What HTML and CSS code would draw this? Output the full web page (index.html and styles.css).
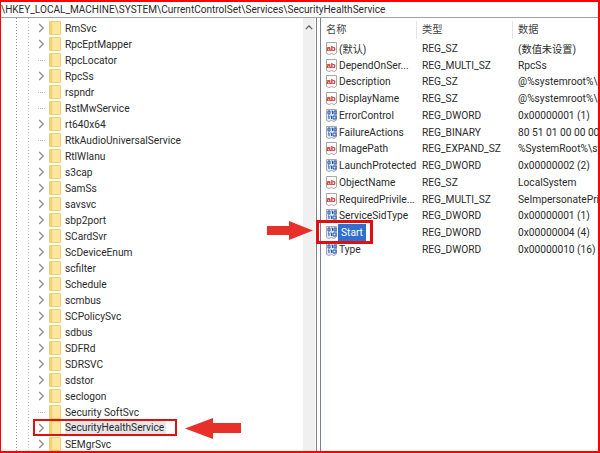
FILE: index.html
```html
<!DOCTYPE html>
<html lang="zh">
<head>
<meta charset="utf-8">
<title>Registry Editor</title>
<link rel="stylesheet" href="styles.css">
</head>
<body>
<svg class="defs" width="0" height="0" aria-hidden="true">
  <symbol id="folder" viewBox="0 0 12 14">
    <path d="M.5 .5h11v13H.5z" fill="#fde79a" stroke="#eccf75" stroke-width="1"/>
    <rect x="1" y="1" width="2" height="12" fill="#f3d069"/>
  </symbol>
  <symbol id="chev" viewBox="0 0 8 10">
    <path d="M1.2 1l4 4-4 4" fill="none" stroke="#8f8f8f" stroke-width="1.4"/>
  </symbol>
  <symbol id="ab" viewBox="0 0 13 13">
    <path d="M1.5 .5h10v10.5l-2.5 1.5-2.5-1-2.5 1-2.5-1z" fill="#fff" stroke="#a8a8a8"/>
    <text x="1.4" y="8.6" class="ab-text">ab</text>
  </symbol>
  <symbol id="bin" viewBox="0 0 13 13">
    <path d="M1.5 .5h10v10.5l-2.5 1.5-2.5-1-2.5 1-2.5-1z" fill="#dfe7f5" stroke="#a8a8a8"/>
    <path d="M3 2h2v3H3zM6.5 2h1v3M9 2h2v3H9zM3 7h1v3M5.5 7h1v3M8 7h3v3H8z" fill="none" stroke="#1f56b0" stroke-width="1"/>
  </symbol>
</svg>
<main class="frame">
  <header class="path">\HKEY_LOCAL_MACHINE\SYSTEM\CurrentControlSet\Services\SecurityHealthService</header>
  <div class="panes">
    <nav class="tree">
      <div class="row"><svg class="chev"><use href="#chev"/></svg><svg class="fold"><use href="#folder"/></svg><span>RmSvc</span></div>
      <div class="row"><svg class="chev"><use href="#chev"/></svg><svg class="fold"><use href="#folder"/></svg><span>RpcEptMapper</span></div>
      <div class="row leaf"><i class="dash"></i><svg class="fold"><use href="#folder"/></svg><span>RpcLocator</span></div>
      <div class="row"><svg class="chev"><use href="#chev"/></svg><svg class="fold"><use href="#folder"/></svg><span>RpcSs</span></div>
      <div class="row leaf"><i class="dash"></i><svg class="fold"><use href="#folder"/></svg><span>rspndr</span></div>
      <div class="row leaf"><i class="dash"></i><svg class="fold"><use href="#folder"/></svg><span>RstMwService</span></div>
      <div class="row"><svg class="chev"><use href="#chev"/></svg><svg class="fold"><use href="#folder"/></svg><span>rt640x64</span></div>
      <div class="row leaf"><i class="dash"></i><svg class="fold"><use href="#folder"/></svg><span>RtkAudioUniversalService</span></div>
      <div class="row"><svg class="chev"><use href="#chev"/></svg><svg class="fold"><use href="#folder"/></svg><span>RtlWlanu</span></div>
      <div class="row"><svg class="chev"><use href="#chev"/></svg><svg class="fold"><use href="#folder"/></svg><span>s3cap</span></div>
      <div class="row"><svg class="chev"><use href="#chev"/></svg><svg class="fold"><use href="#folder"/></svg><span>SamSs</span></div>
      <div class="row"><svg class="chev"><use href="#chev"/></svg><svg class="fold"><use href="#folder"/></svg><span>savsvc</span></div>
      <div class="row"><svg class="chev"><use href="#chev"/></svg><svg class="fold"><use href="#folder"/></svg><span>sbp2port</span></div>
      <div class="row"><svg class="chev"><use href="#chev"/></svg><svg class="fold"><use href="#folder"/></svg><span>SCardSvr</span></div>
      <div class="row"><svg class="chev"><use href="#chev"/></svg><svg class="fold"><use href="#folder"/></svg><span>ScDeviceEnum</span></div>
      <div class="row"><svg class="chev"><use href="#chev"/></svg><svg class="fold"><use href="#folder"/></svg><span>scfilter</span></div>
      <div class="row"><svg class="chev"><use href="#chev"/></svg><svg class="fold"><use href="#folder"/></svg><span>Schedule</span></div>
      <div class="row"><svg class="chev"><use href="#chev"/></svg><svg class="fold"><use href="#folder"/></svg><span>scmbus</span></div>
      <div class="row"><svg class="chev"><use href="#chev"/></svg><svg class="fold"><use href="#folder"/></svg><span>SCPolicySvc</span></div>
      <div class="row"><svg class="chev"><use href="#chev"/></svg><svg class="fold"><use href="#folder"/></svg><span>sdbus</span></div>
      <div class="row"><svg class="chev"><use href="#chev"/></svg><svg class="fold"><use href="#folder"/></svg><span>SDFRd</span></div>
      <div class="row"><svg class="chev"><use href="#chev"/></svg><svg class="fold"><use href="#folder"/></svg><span>SDRSVC</span></div>
      <div class="row"><svg class="chev"><use href="#chev"/></svg><svg class="fold"><use href="#folder"/></svg><span>sdstor</span></div>
      <div class="row"><svg class="chev"><use href="#chev"/></svg><svg class="fold"><use href="#folder"/></svg><span>seclogon</span></div>
      <div class="row leaf"><i class="dash"></i><svg class="fold"><use href="#folder"/></svg><span>Security SoftSvc</span></div>
      <div class="row sel-key"><svg class="chev"><use href="#chev"/></svg><svg class="fold"><use href="#folder"/></svg><span>SecurityHealthService</span></div>
      <div class="row"><svg class="chev"><use href="#chev"/></svg><svg class="fold"><use href="#folder"/></svg><span>SEMgrSvc</span></div>
    </nav>
    <aside class="scroll"><svg class="up" viewBox="0 0 10 6"><path d="M1 5l4-4 4 4" fill="none" stroke="#555" stroke-width="1.5"/></svg></aside>
    <section class="values">
      <div class="heads"><div>名称</div><div>类型</div><div>数据</div></div>
      <div class="val"><div class="name"><svg class="ico"><use href="#ab"/></svg><span>(默认)</span></div><div>REG_SZ</div><div>(数值未设置)</div></div>
      <div class="val"><div class="name"><svg class="ico"><use href="#ab"/></svg><span>DependOnSer...</span></div><div>REG_MULTI_SZ</div><div>RpcSs</div></div>
      <div class="val"><div class="name"><svg class="ico"><use href="#ab"/></svg><span>Description</span></div><div>REG_SZ</div><div>@%systemroot%\system32</div></div>
      <div class="val"><div class="name"><svg class="ico"><use href="#ab"/></svg><span>DisplayName</span></div><div>REG_SZ</div><div>@%systemroot%\system32</div></div>
      <div class="val"><div class="name"><svg class="ico"><use href="#bin"/></svg><span>ErrorControl</span></div><div>REG_DWORD</div><div>0x00000001 (1)</div></div>
      <div class="val"><div class="name"><svg class="ico"><use href="#bin"/></svg><span>FailureActions</span></div><div>REG_BINARY</div><div>80 51 01 00 00 00 00 00</div></div>
      <div class="val"><div class="name"><svg class="ico"><use href="#ab"/></svg><span>ImagePath</span></div><div>REG_EXPAND_SZ</div><div>%SystemRoot%\system32</div></div>
      <div class="val"><div class="name"><svg class="ico"><use href="#bin"/></svg><span>LaunchProtected</span></div><div>REG_DWORD</div><div>0x00000002 (2)</div></div>
      <div class="val"><div class="name"><svg class="ico"><use href="#ab"/></svg><span>ObjectName</span></div><div>REG_SZ</div><div>LocalSystem</div></div>
      <div class="val"><div class="name"><svg class="ico"><use href="#ab"/></svg><span>RequiredPrivile...</span></div><div>REG_MULTI_SZ</div><div>SeImpersonatePrivilege</div></div>
      <div class="val"><div class="name"><svg class="ico"><use href="#bin"/></svg><span>ServiceSidType</span></div><div>REG_DWORD</div><div>0x00000001 (1)</div></div>
      <div class="val"><div class="name"><svg class="ico"><use href="#bin"/></svg><span class="sel-val">Start</span></div><div>REG_DWORD</div><div>0x00000004 (4)</div></div>
      <div class="val"><div class="name"><svg class="ico"><use href="#bin"/></svg><span>Type</span></div><div>REG_DWORD</div><div>0x00000010 (16)</div></div>
    </section>
  </div>
  <div class="mark box-key"></div>
  <div class="mark box-val"></div>
  <svg class="arrow arrow-left" viewBox="0 0 56 21"><path d="M0 10.5L28 0v5h28v10H28v6z" fill="#e8302a"/></svg>
  <svg class="arrow arrow-right" viewBox="0 0 46 19"><path d="M46 9.5L22 0v5H0v9h22v5z" fill="#e8302a"/></svg>
</main>
</body>
</html>
```
FILE: styles.css
```css
* { box-sizing: border-box; }
html, body { margin: 0; padding: 0; }
body {
  width: 600px;
  height: 453px;
  overflow: hidden;
  background: #fff;
  font-family: Roboto, "Noto Sans CJK SC", sans-serif;
  font-size: 10.2px;
  color: #2a2a2a;
}
.defs { position: absolute; }
.frame {
  position: relative;
  width: 600px;
  height: 453px;
  border: solid #f00;
  border-width: 2px 2px 2px 1px;
  display: flex;
  flex-direction: column;
  overflow: hidden;
}
.path {
  height: 16px;
  line-height: 15px;
  border-bottom: 1px solid #a0a0a0;
  white-space: nowrap;
  flex: none;
  font-size: 10.05px;
}
.panes { flex: 1; display: flex; min-height: 0; }
.tree {
  width: 302px;
  flex: none;
  padding: 2px 0 0 0;
  background-image:
    repeating-linear-gradient(#8f8f8f 0 1px, transparent 1px 3px),
    repeating-linear-gradient(#bdbdbd 0 1px, transparent 1px 3px);
  background-size: 1px 100%, 1px 100%;
  background-position: 15px 0, 27px 0;
  background-repeat: no-repeat;
  overflow: hidden;
}
.row {
  height: 16px;
  display: flex;
  align-items: center;
  padding-left: 37px;
  white-space: nowrap;
}
.chev { width: 8px; height: 10px; flex: none; margin-right: 3px; }
.dash {
  width: 7px;
  height: 1px;
  margin: 0 4px 0 0;
  flex: none;
  background: repeating-linear-gradient(90deg, #b5b5b5 0 1px, transparent 1px 2px);
}
.leaf { padding-left: 37px; }
.fold { width: 12px; height: 14px; flex: none; margin-right: 4px; }
.sel-key span { background: #e6e6e6; padding-right: 2px; line-height: 14px; }
.sel-key .fold { background: #e6e6e6; }
.scroll {
  width: 12px;
  margin-right: 1px;
  flex: none;
  background: #f0f0f0;
  display: flex;
  justify-content: center;
  padding-top: 7px;
  align-items: flex-start;
}
.up { width: 8px; height: 5px; }
.values {
  flex: 1;
  min-width: 0;
  border-left: 1px solid #7a8196;
  position: relative;
  padding-left: 3px;
  overflow: hidden;
}
.values::before {
  content: "";
  position: absolute;
  left: 3px;
  top: 0;
  bottom: 0;
  width: 1px;
  background: #7a8196;
}
.heads {
  display: grid;
  grid-template-columns: 96px 96px 1fr;
  height: 21px;
  margin-bottom: 1px;
  padding: 3px 0 0 1px;
  align-items: center;
  color: #444;
}
.heads div { padding-left: 5px; height: 18px; line-height: 18px; border-right: 1px solid #e4e4e4; }
.heads div:last-child { border: 0; }
.val {
  display: grid;
  grid-template-columns: 96px 96px 1fr;
  height: 16.75px;
  align-items: center;
  padding-left: 1px;
  white-space: nowrap;
}
.val > div { padding-left: 5px; overflow: hidden; }
.val > .name { display: flex; align-items: center; padding-left: 4px; overflow: visible; }
.ico { width: 13px; height: 13px; flex: none; margin-right: 1px; }
.ab-text { font: bold 8px "Liberation Sans", sans-serif; fill: #c8281e; }
.sel-val { background: #2f6fd0; color: #fff; padding: 0 3px; line-height: 17px; margin-left: -1px; }
.mark { position: absolute; border: solid #e01010; }
.box-key { left: 32px; top: 417px; width: 144px; height: 17px; border-width: 2px; }
.box-val { left: 315px; top: 218px; width: 57px; height: 24px; border-width: 3px; }
.arrow { position: absolute; }
.arrow-left { left: 184px; top: 416px; width: 56px; height: 21px; }
.arrow-right { left: 266px; top: 219px; width: 46px; height: 19px; }
```
